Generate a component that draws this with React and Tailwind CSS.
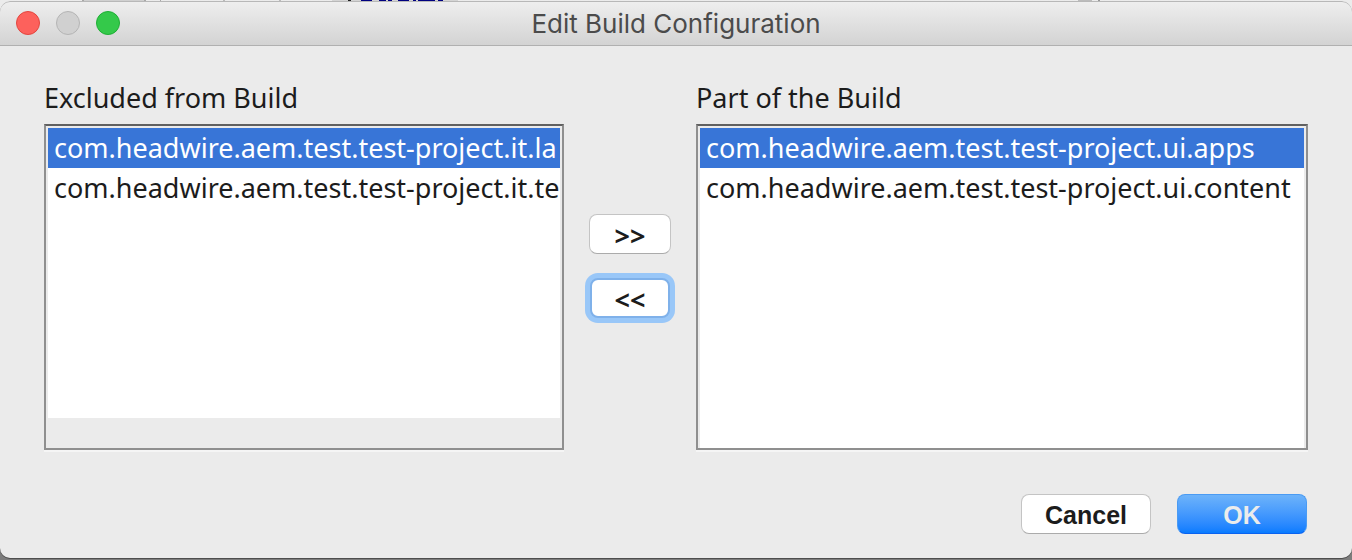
const excluded = [
  'com.headwire.aem.test.test-project.it.la',
  'com.headwire.aem.test.test-project.it.te',
];
const included = [
  'com.headwire.aem.test.test-project.ui.apps',
  'com.headwire.aem.test.test-project.ui.content',
];

function ModuleList({ id, label, items, scrollGutter }) {
  return (
    <div className="flex h-full min-w-0 flex-col">
      <h2 id={id} className="h-[44px] text-[27px] leading-[36px]">
        {label}
      </h2>
      <div className="flex min-h-0 flex-1 flex-col border-2 border-[#8f8f8f] border-t-[#606060] shadow-[0_2px_0_#f5f5f5]">
        <ul
          role="listbox"
          aria-labelledby={id}
          className="mx-[2px] mt-[2px] min-h-0 flex-1 overflow-hidden bg-white text-[27px] leading-[40px]"
        >
          {items.map((item, i) => (
            <li
              key={item}
              role="option"
              aria-selected={i === 0}
              className={
                i === 0
                  ? 'h-[40px] overflow-hidden whitespace-nowrap bg-[#3875d7] pl-[6px] text-white'
                  : 'h-[40px] overflow-hidden whitespace-nowrap pl-[6px]'
              }
            >
              {item}
            </li>
          ))}
        </ul>
        {scrollGutter && <div className="h-[30px] shrink-0" />}
      </div>
    </div>
  );
}

function Backdrop() {
  return (
    <svg aria-hidden="true" className="absolute top-0 left-0 h-[2px] w-full">
      <rect x="82" width="63" height="2" fill="#d0d0d0" />
      <rect x="82" width="2" height="2" fill="#a8a8a8" />
      <rect x="144" width="2" height="2" fill="#a8a8a8" />
      <rect x="160" width="1" height="2" fill="#a8a8a8" />
      <rect x="223" width="2" height="2" fill="#bbb" />
      <rect x="279" width="2" height="2" fill="#bbb" />
      <rect x="332" width="126" height="2" fill="#d4d4d4" />
      <rect x="348" width="3" height="2" fill="#222" />
      <path d="M361 1h11M379 1h7M388 1h4M398 1h11M413 1h3M418 1h17M438 1h5" stroke="#000080" strokeWidth="2" />
      <rect x="1078" width="14" height="2" fill="#bcbcbc" />
      <rect x="1098" width="2" height="2" fill="#999" />
    </svg>
  );
}

export default function App() {
  return (
    <div className="relative flex h-screen min-h-[360px] flex-col bg-linear-to-b from-[#ececec] from-50% to-[#7c7c7c] to-50% pt-px pb-[2px] font-['Noto_Sans','Open_Sans',sans-serif] text-[#1c1c1c]">
      <Backdrop />
      <div
        role="dialog"
        aria-labelledby="title"
        className="relative flex min-h-0 flex-1 flex-col overflow-hidden rounded-[10px] bg-[#ebebeb] shadow-[0_1px_0_#4e4e4e]"
      >
        <header className="grid h-[45px] shrink-0 grid-cols-[1fr_auto_1fr] items-center rounded-t-[10px] border-b border-b-[#b0b0b0] bg-linear-to-b from-[#efefef] to-[#d3d3d3] px-4 shadow-[inset_0_1px_0_#b8b8b8]">
          <div className="flex gap-4">
            <button aria-label="Close" className="size-6 rounded-full border border-[#e2463f] bg-[#fd615c]" />
            <button aria-label="Minimize" disabled className="size-6 rounded-full border border-[#b4b4b4] bg-[#d0d0d0]" />
            <button aria-label="Zoom" className="size-6 rounded-full border border-[#1fae35] bg-[#34c94a]" />
          </div>
          <h1 id="title" className="pt-[2px] font-[Inter,sans-serif] text-[26px] leading-[40px] text-[#4b4b4b]">
            Edit Build Configuration
          </h1>
        </header>
        <main className="flex min-h-0 flex-1 flex-col px-[44px] pt-[34px] pb-[24px]">
          <div className="grid min-h-0 flex-1 grid-cols-[520fr_132px_612fr]">
            <ModuleList id="excluded" label="Excluded from Build" items={excluded} scrollGutter />
            <div className="flex flex-col items-center gap-6 pt-[134px] text-[27px] font-bold">
              <button
                aria-label="Include in build"
                className="flex h-[40px] w-[82px] items-center justify-center rounded-[8px] border border-[#c4c4c4] border-b-[#ababab] bg-white pt-1"
              >
                &gt;&gt;
              </button>
              <button
                aria-label="Exclude from build"
                className="flex h-[40px] w-[80px] items-center justify-center rounded-[8px] border-2 border-[#7fb1ea] bg-white pt-1 shadow-[0_0_0_5px_#99c7f8]"
              >
                &lt;&lt;
              </button>
            </div>
            <ModuleList id="included" label="Part of the Build" items={included} />
          </div>
          <footer className="mt-[44px] flex justify-end gap-[26px] pr-px font-['Liberation_Sans',sans-serif] text-[25px] font-bold">
            <button className="h-[40px] w-[130px] rounded-[8px] border border-[#c4c4c4] border-b-[#ababab] bg-white pt-[2px]">
              Cancel
            </button>
            <button className="h-[40px] w-[130px] rounded-[8px] border border-[#4a9bf3] border-b-[#0a62f0] bg-linear-to-b from-[#6db3fa] to-[#067bff] pt-[2px] text-[#ececec]">
              OK
            </button>
          </footer>
        </main>
      </div>
    </div>
  );
}
